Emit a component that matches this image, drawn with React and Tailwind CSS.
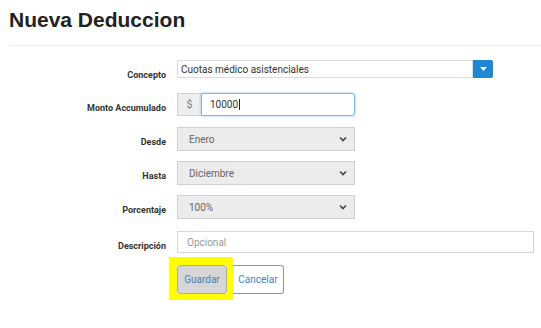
import React from 'react';

const Chevron = () => (
  <svg width="10" height="10" viewBox="0 0 10 10" className="shrink-0">
    <path d="M2 3.5 5 6.5 8 3.5" fill="none" stroke="#444" strokeWidth="1.6" />
  </svg>
);

const Row = ({ label, className = '', children }) => (
  <div className={`flex items-start ${className}`}>
    <label className="w-[166px] shrink-0 pt-[10px] text-right text-[9px] leading-[11px] font-bold text-[#333]">
      {label}
    </label>
    <div className="ml-[11px]">{children}</div>
  </div>
);

const SelectBox = ({ value }) => (
  <div className="flex h-[24px] w-[178px] items-center justify-between border border-[#d0d0d0] bg-[#ececec] pl-[11px] pr-[6px] text-[10px] text-[#666]">
    <span>{value}</span>
    <Chevron />
  </div>
);

export default function App() {
  return (
    <div className="h-[328px] w-[541px] overflow-hidden bg-white font-['Roboto',sans-serif]">
      <div className="pl-[9px]">
        <h1 className="pt-[8px] font-['Liberation_Sans',Arial,sans-serif] text-[21px] leading-[23px] font-bold text-[#222]">
          Nueva Deduccion
        </h1>
        <div className="mt-[14px] border-t border-[#eee]" />
      </div>

      <div className="pt-[14px]">
        <Row label="Concepto">
          <div className="flex h-[18px] w-[316px]">
            <div className="flex flex-1 items-center border border-[#dcdcdc] bg-white pl-[3px] text-[10px] text-[#333]">
              Cuotas médico asistenciales
            </div>
            <div className="flex w-[20px] items-center justify-center rounded-r-[2px] bg-[#1f86d2]">
              <svg width="7" height="4" viewBox="0 0 7 4">
                <path d="M0 0h7L3.5 4z" fill="#fff" />
              </svg>
            </div>
          </div>
        </Row>

        <Row label="Monto Accumulado" className="mt-[12px]">
          <div className="flex h-[23px] w-[178px]">
            <div className="flex w-[24px] items-center justify-center border border-r-0 border-[#d0d0d0] bg-[#eee] text-[10px] text-[#777]">
              $
            </div>
            <div className="flex flex-1 items-center rounded-r-[3px] border border-[#7ab6ea] bg-white pl-[8px] text-[10px] text-[#333] shadow-[0_0_3px_rgba(102,175,233,0.7)]">
              10000<span className="ml-[1px] h-[11px] w-px bg-[#222]" />
            </div>
          </div>
        </Row>

        <Row label="Desde" className="mt-[11px]">
          <SelectBox value="Enero" />
        </Row>

        <Row label="Hasta" className="mt-[10px]">
          <SelectBox value="Diciembre" />
        </Row>

        <Row label="Porcentaje" className="mt-[10px]">
          <SelectBox value="100%" />
        </Row>

        <Row label="Descripción" className="mt-[12px]">
          <div className="flex h-[22px] w-[357px] items-center border border-[#d6d6d6] bg-white pl-[9px] text-[10px] text-[#999]">
            Opcional
          </div>
        </Row>

        <div className="mt-[4px] flex pl-[169px]">
          <div className="border-t-[8px] border-r-[6px] border-b-[6px] border-l-[8px] border-[#ffff00]">
            <button className="flex h-[29px] w-[50px] items-center justify-center rounded-[3px] border border-[#a9a9a9] bg-[#d6d6d6] text-[10px] text-[#3f7fc0]">
              Guardar
            </button>
          </div>
          <button className="mt-[8px] flex h-[29px] w-[51px] items-center justify-center rounded-r-[3px] border border-l-0 border-[#5ea3d9] bg-white text-[10px] text-[#3b86cc]">
            Cancelar
          </button>
        </div>
      </div>
    </div>
  );
}
